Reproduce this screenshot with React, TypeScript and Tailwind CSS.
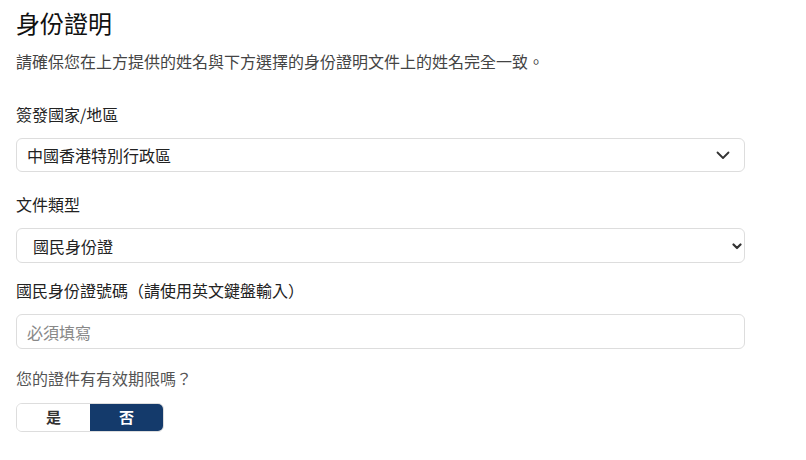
import { useState } from 'react'

const font = { fontFamily: '"Noto Sans CJK TC", "Noto Sans", sans-serif' }

function Chevron({ bold }: { bold?: boolean }) {
  if (bold) {
    return (
      <svg width="10" height="8" viewBox="0 0 10 8" className="text-[#333]">
        <path d="M1.5 2.5 L5 6 L8.5 2.5" fill="none" stroke="currentColor" strokeWidth="2.2" strokeLinecap="round" strokeLinejoin="round" />
      </svg>
    )
  }
  return (
    <svg width="14" height="9" viewBox="0 0 14 9" className="text-[#333]">
      <path d="M1.5 1.5 L7 7 L12.5 1.5" fill="none" stroke="currentColor" strokeWidth="1.8" strokeLinecap="round" strokeLinejoin="round" />
    </svg>
  )
}

export default function App() {
  const [expires, setExpires] = useState(false)

  return (
    <div className="w-[806px] h-[460px] bg-white px-4" style={font}>
      <h1 className="pt-[7px] text-2xl leading-8 text-[#111] font-normal">身份證明</h1>
      <p className="mt-[10px] text-base leading-6 text-[#444]">
        請確保您在上方提供的姓名與下方選擇的身份證明文件上的姓名完全一致。
      </p>

      <div className="mt-[29px] text-base leading-6 text-[#222]">簽發國家/地區</div>
      <div className="mt-3 w-[729px] h-[34px] flex items-center justify-between border border-[#ddd] rounded-md pl-[10px] pr-[14px]">
        <span className="text-base text-[#222]">中國香港特別行政區</span>
        <Chevron />
      </div>

      <div className="mt-5 text-base leading-6 text-[#222]">文件類型</div>
      <div className="mt-3 w-[729px] h-[35px] flex items-center justify-between border border-[#ddd] rounded-md pl-4 pr-[2px]">
        <span className="text-base text-[#222]">國民身份證</span>
        <Chevron bold />
      </div>

      <div className="mt-[15px] text-base leading-6 text-[#222]">國民身份證號碼（請使用英文鍵盤輸入）</div>
      <input
        className="mt-3 block w-[729px] h-[35px] border border-[#ddd] rounded-md px-[10px] text-base text-[#222] placeholder:text-[#888] outline-none"
        placeholder="必須填寫"
        style={font}
      />

      <div className="mt-[17px] text-base leading-6 text-[#555]">您的證件有有效期限嗎？</div>
      <div className="mt-[13px] flex w-[148px] h-[29px] rounded-md overflow-hidden border border-[#ddd]">
        <button
          onClick={() => setExpires(true)}
          className={`flex-1 text-[15px] font-bold ${expires ? 'bg-[#143a6b] text-white' : 'bg-white text-[#333]'}`}
        >
          是
        </button>
        <button
          onClick={() => setExpires(false)}
          className={`flex-1 text-[15px] font-bold ${!expires ? 'bg-[#143a6b] text-white' : 'bg-white text-[#333]'}`}
        >
          否
        </button>
      </div>
    </div>
  )
}
